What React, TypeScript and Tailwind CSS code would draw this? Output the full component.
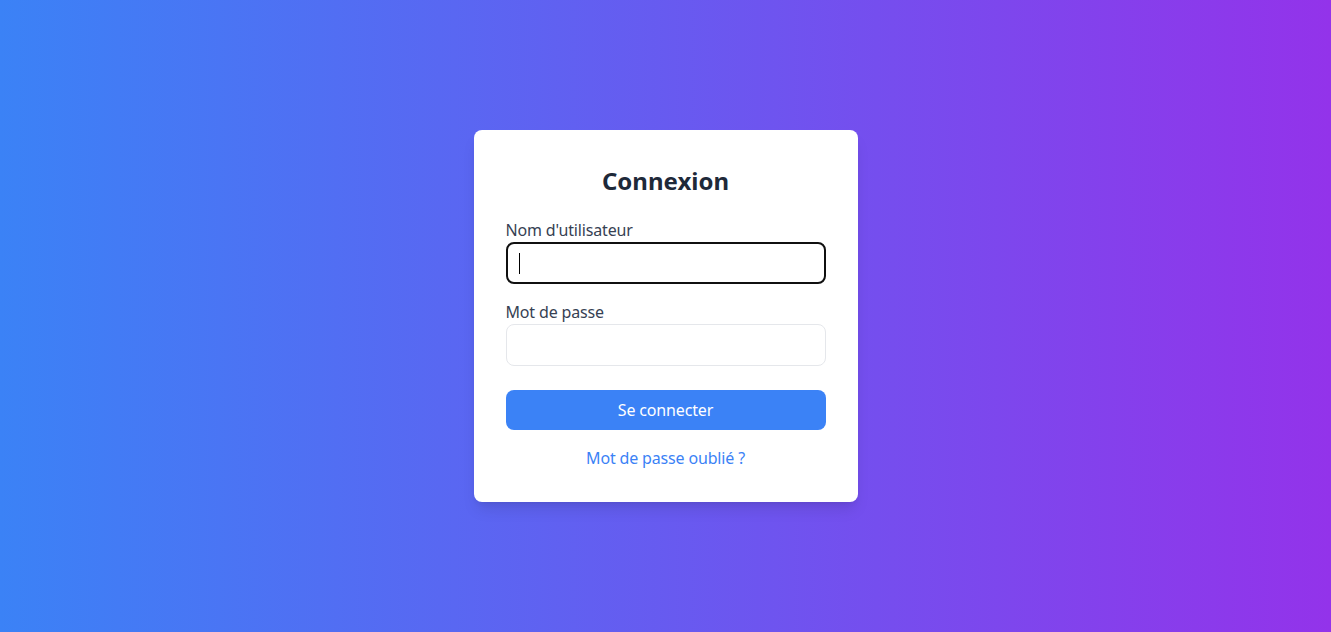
import React from "react";

export default function App() {
  return (
    <div
      className="min-h-screen w-full flex items-center justify-center bg-linear-to-r/srgb from-[#3b82f6] to-[#9333ea]"
      style={{ fontFamily: '"Noto Sans", "Open Sans", sans-serif' }}
    >
      <div className="w-96 bg-white rounded-lg shadow-lg p-8">
        <h1 className="text-2xl leading-8 font-bold text-center text-gray-800 mb-6 pt-[3px] -mb-[3px]">
          <span className="block -mb-[3px]">Connexion</span>
        </h1>
        <div className="mb-4 mt-6">
          <label className="block text-base leading-6 text-gray-700 tracking-[-0.01em]">Nom d'utilisateur</label>
          <div className="h-[42px] w-full rounded-lg border-2 border-[#101010] flex items-center pl-[11px]">
            <span className="block w-px h-[21px] bg-black" />
          </div>
        </div>
        <div className="mb-6">
          <label className="block text-base leading-6 text-gray-700 tracking-[-0.01em]">Mot de passe</label>
          <input
            type="password"
            className="block w-full h-[42px] rounded-lg border border-gray-200 px-3 outline-none"
          />
        </div>
        <button className="w-full h-10 rounded-lg bg-[#3b82f6] text-white text-base leading-6 tracking-[-0.01em]">
          Se connecter
        </button>
        <div className="mt-4 text-center">
          <a className="text-[#3b82f6] text-base leading-6 tracking-[-0.01em]">Mot de passe oublié ?</a>
        </div>
      </div>
    </div>
  );
}
